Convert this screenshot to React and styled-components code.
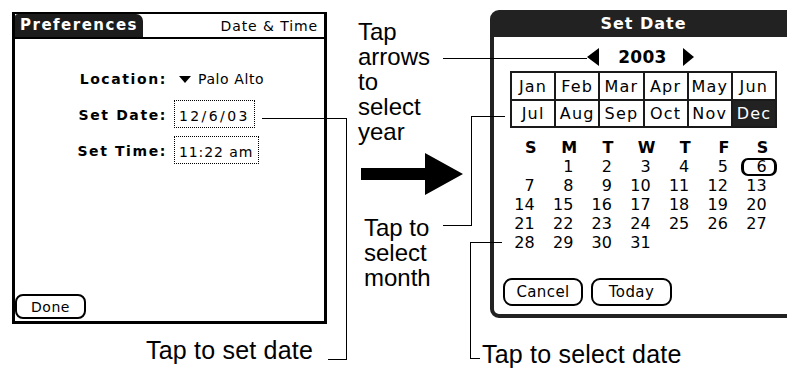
import React from "react";
import styled, { createGlobalStyle } from "styled-components";

// Palm OS date picker walkthrough: preferences screen, callouts, Set Date dialog

const GlobalStyle = createGlobalStyle`
  html, body {
    margin: 0;
    padding: 0;
    background: #fff;
  }
  body {
    font-family: "DejaVu Sans", sans-serif;
    color: #000;
  }
`;

const Stage = styled.div`
  position: relative;
  width: 787px;
  height: 368px;
  overflow: hidden;
  background: #fff;
  display: flex;
  align-items: flex-start;
  padding: 10px 0 0 12px;
  box-sizing: border-box;
`;

// ---------- left: Preferences screen ----------

const LeftColumn = styled.div`
  flex: none;
  width: 315px;
  margin-top: 2px;
  display: flex;
  flex-direction: column;
  align-items: flex-end;
`;

const PrefsPanel = styled.div`
  box-sizing: border-box;
  width: 315px;
  height: 312px;
  border: 3px solid #000;
  border-top-width: 2px;
  display: flex;
  flex-direction: column;
`;

const TitleRow = styled.div`
  display: flex;
  justify-content: space-between;
  align-items: stretch;
  height: 25px;
  box-sizing: border-box;
  border-bottom: 2px solid #000;
`;

const TitleTab = styled.div`
  width: 128px;
  background: #1c1c1c;
  color: #fff;
  border-radius: 3px 7px 0 0;
  font-weight: bold;
  font-size: 15px;
  letter-spacing: 1.5px;
  padding: 2px 0 0 5px;
  box-sizing: border-box;
`;

const TitleRight = styled.div`
  font-size: 14px;
  letter-spacing: 0.9px;
  padding: 4px 6px 0 0;
`;

const Form = styled.div`
  display: grid;
  grid-template-columns: 152px auto;
  grid-auto-rows: 28px;
  column-gap: 7px;
  row-gap: 8px;
  align-items: center;
  margin-top: 25px;
`;

const Label = styled.div`
  font-weight: bold;
  font-size: 14px;
  letter-spacing: 1.6px;
  text-align: right;
  padding-top: 2px;
`;

const Picker = styled.div`
  display: flex;
  align-items: center;
  gap: 7px;
  padding-left: 5px;
  font-size: 14px;
  letter-spacing: 0.6px;
  padding-top: 2px;
`;

const DownTriangle = styled.span`
  width: 0;
  height: 0;
  border-left: 6.5px solid transparent;
  border-right: 6.5px solid transparent;
  border-top: 7px solid #000;
`;

const Field = styled.div`
  box-sizing: border-box;
  width: ${(p) => p.$w}px;
  height: 28px;
  border: 1px dotted #000;
  display: flex;
  align-items: center;
  padding: 3px 0 0 4px;
  font-size: 14px;
  letter-spacing: ${(p) => p.$spacing}px;
`;

const DoneButton = styled.div`
  margin-top: auto;
  margin-bottom: 2px;
  width: 71px;
  height: 25px;
  box-sizing: border-box;
  border: 2px solid #000;
  border-radius: 8px;
  display: flex;
  align-items: center;
  justify-content: center;
  font-size: 14px;
  letter-spacing: 0.5px;
`;

const Caption = styled.div`
  font-family: "Liberation Sans", Arial, sans-serif;
  font-size: 25px;
  line-height: 24px;
  letter-spacing: 0.2px;
  white-space: nowrap;
  margin-top: ${(p) => p.$top}px;
  margin-right: ${(p) => p.$right || 0}px;
  margin-left: ${(p) => p.$left || 0}px;
`;

// ---------- middle: callout text and arrow ----------

const MiddleColumn = styled.div`
  flex: none;
  width: 163px;
  box-sizing: border-box;
  padding-left: 31px;
  margin-top: 9px;
  display: flex;
  flex-direction: column;
  align-items: flex-start;
`;

const Callout = styled.div`
  font-family: "Liberation Sans", Arial, sans-serif;
  font-size: 24px;
  line-height: 25px;
  margin-top: ${(p) => p.$top || 0}px;
  padding-left: ${(p) => p.$indent || 0}px;
`;

const BigArrow = styled.svg`
  display: block;
  margin: 9px 0 0 3px;
`;

// ---------- right: Set Date dialog ----------

const RightColumn = styled.div`
  flex: none;
  width: 310px;
  display: flex;
  flex-direction: column;
  align-items: flex-start;
`;

const DatePanel = styled.div`
  box-sizing: border-box;
  width: 307px;
  height: 308px;
  border: 4px solid #222;
  border-radius: 9px 9px 0 9px;
  display: flex;
  flex-direction: column;
`;

const DialogTitle = styled.div`
  height: 23px;
  background: #222;
  color: #fff;
  font-weight: bold;
  font-size: 16px;
  letter-spacing: 1px;
  text-align: center;
  line-height: 20px;
`;

const YearRow = styled.div`
  display: flex;
  align-items: center;
  justify-content: center;
  height: 20px;
  margin: 10px 6px 0 0;
`;

const YearArrow = styled.span`
  width: 0;
  height: 0;
  border-top: 9px solid transparent;
  border-bottom: 9px solid transparent;
  ${(p) =>
    p.$dir === "left"
      ? "border-right: 12px solid #000; margin-right: 19px;"
      : "border-left: 11px solid #000; margin-left: 16px;"}
`;

const Year = styled.div`
  font-weight: bold;
  font-size: 17px;
  letter-spacing: 0.3px;
`;

const MonthGrid = styled.div`
  display: grid;
  grid-template-columns: repeat(6, 1fr);
  grid-template-rows: repeat(2, 1fr);
  gap: 2px;
  padding: 2px;
  background: #1a1a1a;
  width: 267px;
  height: 57px;
  box-sizing: border-box;
  margin: 4px 0 0 16px;
`;

const MonthCell = styled.div`
  background: ${(p) => (p.$active ? "#222" : "#fff")};
  color: ${(p) => (p.$active ? "#fff" : "#000")};
  display: flex;
  align-items: center;
  justify-content: center;
  font-size: 16px;
  letter-spacing: 1.2px;
  padding-top: 1px;
`;

const DayGrid = styled.div`
  display: grid;
  grid-template-columns: repeat(7, 38.67px);
  grid-template-rows: 20px repeat(5, 19px);
  margin: 9px 0 0 2px;
`;

const DayHead = styled.div`
  justify-self: end;
  width: 16px;
  margin-right: -4px;
  display: flex;
  justify-content: center;
  align-items: center;
  font-weight: bold;
  font-size: 16px;
`;

const Day = styled.div`
  justify-self: end;
  align-self: center;
  font-size: 16px;
  line-height: 19px;
`;

const SelectedDay = styled.div`
  justify-self: end;
  align-self: center;
  box-sizing: border-box;
  width: 36px;
  height: 18px;
  margin-right: -10px;
  border: 2px solid #000;
  border-left-width: 3px;
  border-right-width: 3px;
  border-radius: 7px;
  display: flex;
  align-items: center;
  justify-content: flex-end;
  padding-right: 7px;
  font-size: 16px;
`;

const ButtonRow = styled.div`
  display: flex;
  gap: 8px;
  margin: 26px 0 0 9px;
`;

const DialogButton = styled.div`
  box-sizing: border-box;
  width: ${(p) => p.$w}px;
  height: 28px;
  border: 2px solid #000;
  border-radius: 9px;
  display: flex;
  align-items: center;
  justify-content: center;
  font-size: 15px;
  letter-spacing: 0.4px;
`;

// leader lines drawn over the whole figure
const Leaders = styled.svg`
  position: absolute;
  left: 0;
  top: 0;
  pointer-events: none;
`;

const months = ["Jan", "Feb", "Mar", "Apr", "May", "Jun", "Jul", "Aug", "Sep", "Oct", "Nov", "Dec"];
const weekDays = ["S", "M", "T", "W", "T", "F", "S"];

// December 2003 starts on a Monday
const dayCells = [null, ...Array.from({ length: 31 }, (_, i) => i + 1)];

const App = () => {
  return (
    <>
      <GlobalStyle />
      <Stage>
        <LeftColumn>
          <PrefsPanel>
            <TitleRow>
              <TitleTab>Preferences</TitleTab>
              <TitleRight>Date &amp; Time</TitleRight>
            </TitleRow>
            <Form>
              <Label>Location:</Label>
              <Picker>
                <DownTriangle />
                Palo Alto
              </Picker>
              <Label>Set Date:</Label>
              <Field $w={81} $spacing={2.4}>
                12/6/03
              </Field>
              <Label>Set Time:</Label>
              <Field $w={85} $spacing={0.9}>
                11:22 am
              </Field>
            </Form>
            <DoneButton>Done</DoneButton>
          </PrefsPanel>
          <Caption $top={14} $right={14}>
            Tap to set date
          </Caption>
        </LeftColumn>

        <MiddleColumn>
          <Callout>
            Tap
            <br />
            arrows
            <br />
            to
            <br />
            select
            <br />
            year
          </Callout>
          <BigArrow width="102" height="42" viewBox="0 0 102 42">
            <polygon points="0,15 64,15 64,0 102,21 64,42 64,27 0,27" fill="#000" />
          </BigArrow>
          <Callout $top={20} $indent={6}>
            Tap to
            <br />
            select
            <br />
            month
          </Callout>
        </MiddleColumn>

        <RightColumn>
          <DatePanel>
            <DialogTitle>Set Date</DialogTitle>
            <YearRow>
              <YearArrow $dir="left" />
              <Year>2003</Year>
              <YearArrow $dir="right" />
            </YearRow>
            <MonthGrid>
              {months.map((m) => (
                <MonthCell key={m} $active={m === "Dec"}>
                  {m}
                </MonthCell>
              ))}
            </MonthGrid>
            <DayGrid>
              {weekDays.map((d, i) => (
                <DayHead key={i}>{d}</DayHead>
              ))}
              {dayCells.map((d, i) =>
                d === 6 ? (
                  <SelectedDay key={i}>6</SelectedDay>
                ) : (
                  <Day key={i}>{d || ""}</Day>
                )
              )}
            </DayGrid>
            <ButtonRow>
              <DialogButton $w={80}>Cancel</DialogButton>
              <DialogButton $w={81}>Today</DialogButton>
            </ButtonRow>
          </DatePanel>
          <Caption $top={24} $left={-8}>
            Tap to select date
          </Caption>
        </RightColumn>

        <Leaders width="787" height="368" viewBox="0 0 787 368">
          <g fill="none" stroke="#000" strokeWidth="1" shapeRendering="crispEdges">
            <path d="M262 118.5 H346.5 V359.5 H328" />
            <path d="M443 58.5 H587" />
            <path d="M443 225.5 H471.5 V116.5 H505" />
            <path d="M502 242.5 H470.5 V358.5 H480" />
          </g>
        </Leaders>
      </Stage>
    </>
  );
};

export default App;
